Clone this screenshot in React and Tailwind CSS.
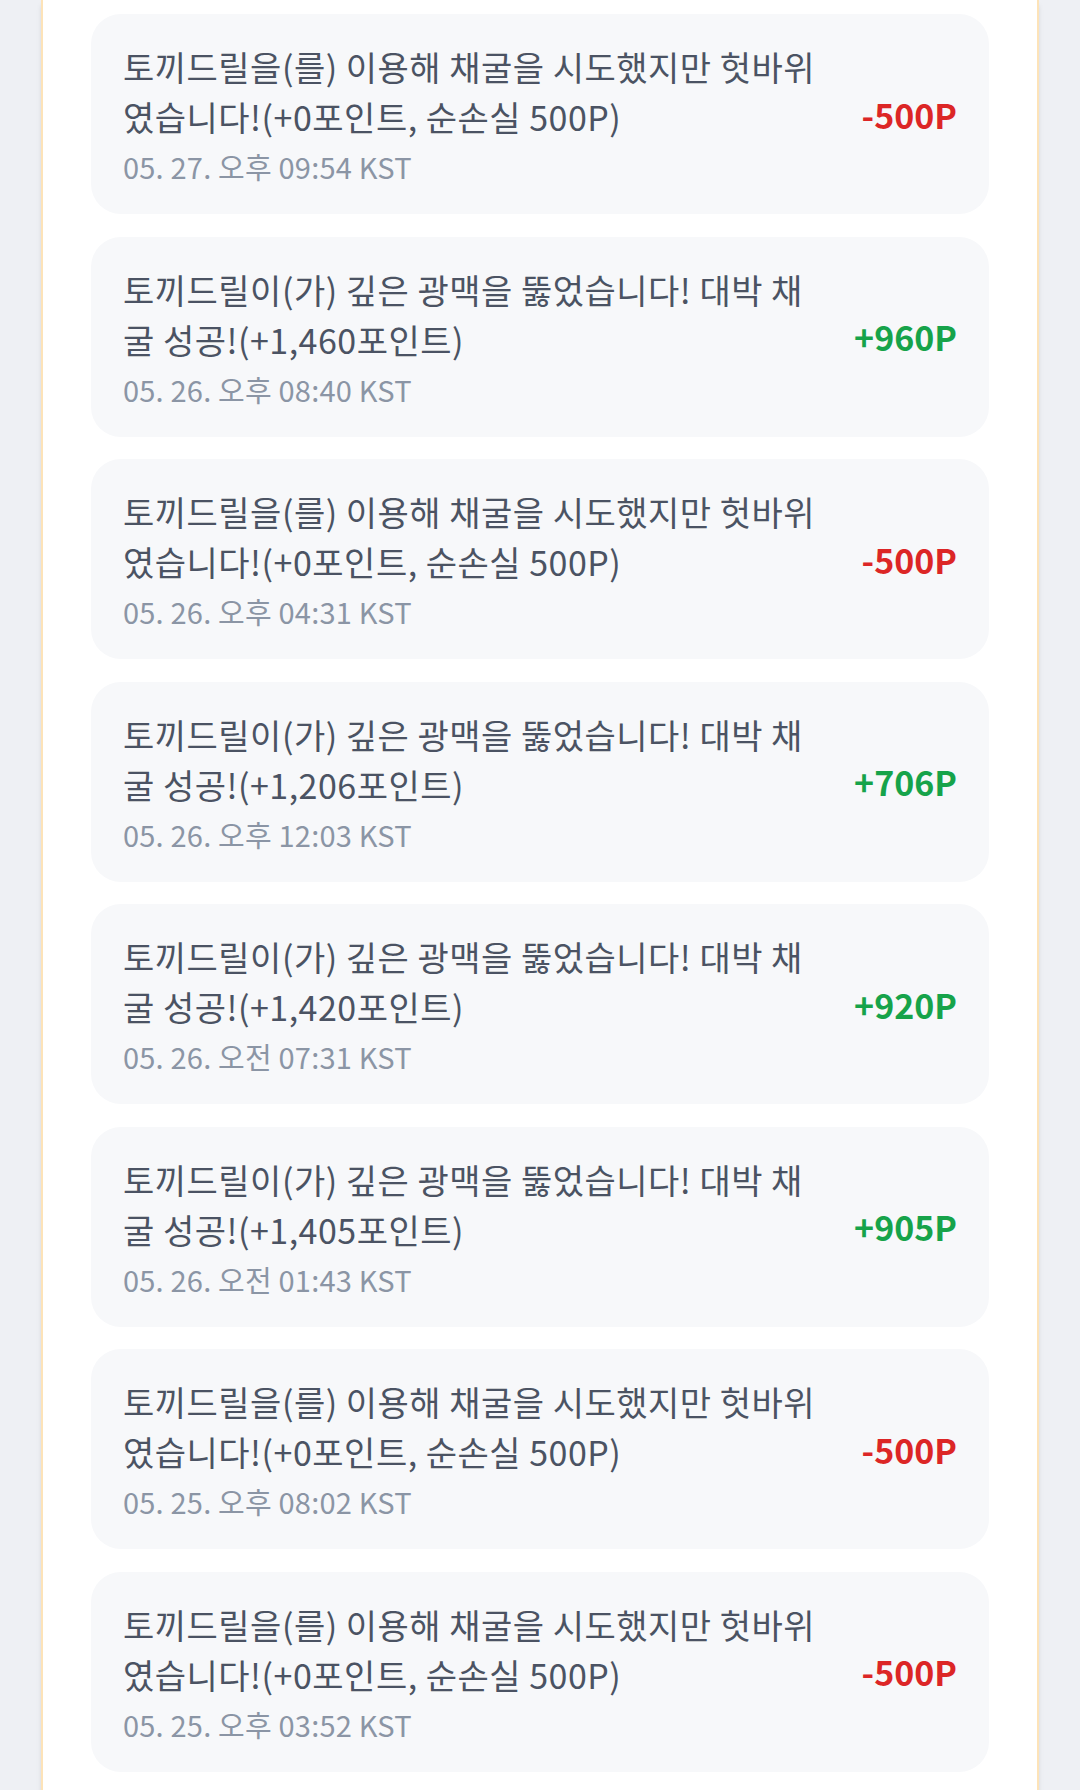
import React from 'react';

const FAIL = '토끼드릴을(를) 이용해 채굴을 시도했지만 헛바위였습니다!(+0포인트, 순손실 500P)';
const win = (pts) => `토끼드릴이(가) 깊은 광맥을 뚫었습니다! 대박 채굴 성공!(+${pts}포인트)`;

const logs = [
  { text: FAIL, date: '05. 27. 오후 09:54 KST', amount: '-500P', gain: false },
  { text: win('1,460'), date: '05. 26. 오후 08:40 KST', amount: '+960P', gain: true },
  { text: FAIL, date: '05. 26. 오후 04:31 KST', amount: '-500P', gain: false },
  { text: win('1,206'), date: '05. 26. 오후 12:03 KST', amount: '+706P', gain: true },
  { text: win('1,420'), date: '05. 26. 오전 07:31 KST', amount: '+920P', gain: true },
  { text: win('1,405'), date: '05. 26. 오전 01:43 KST', amount: '+905P', gain: true },
  { text: FAIL, date: '05. 25. 오후 08:02 KST', amount: '-500P', gain: false },
  { text: FAIL, date: '05. 25. 오후 03:52 KST', amount: '-500P', gain: false },
];

function LogItem({ item }) {
  return (
    <div className="flex items-center gap-8 rounded-[30px] bg-[#f7f8fa] px-8 py-[28px]">
      <div className="flex-1 min-w-0">
        <p className="text-[34px] leading-[50px] tracking-[0.5px] text-[#4b5363]">{item.text}</p>
        <p className="mt-[4px] text-[29px] leading-[40px] tracking-[0.2px] text-[#8b95a5]">{item.date}</p>
      </div>
      <span
        className={
          item.gain
            ? 'shrink-0 text-[34px] font-bold text-[#16a34a]'
            : 'shrink-0 text-[34px] font-bold text-[#dc2626]'
        }
      >
        {item.amount}
      </span>
    </div>
  );
}

export default function App() {
  return (
    <div
      className="min-h-screen bg-[#eef0f4] px-[41px]"
      style={{ fontFamily: '"Noto Sans CJK KR", "Noto Sans", sans-serif' }}
    >
      <div className="min-h-screen bg-white border-x-2 border-[#fde3b8] px-12 pt-[14px] pb-10 shadow-md">
        {/* 채굴 기록 */}
        <div className="flex flex-col gap-[22.5px]">
          {logs.map((item, i) => (
            <LogItem key={i} item={item} />
          ))}
        </div>
      </div>
    </div>
  );
}
